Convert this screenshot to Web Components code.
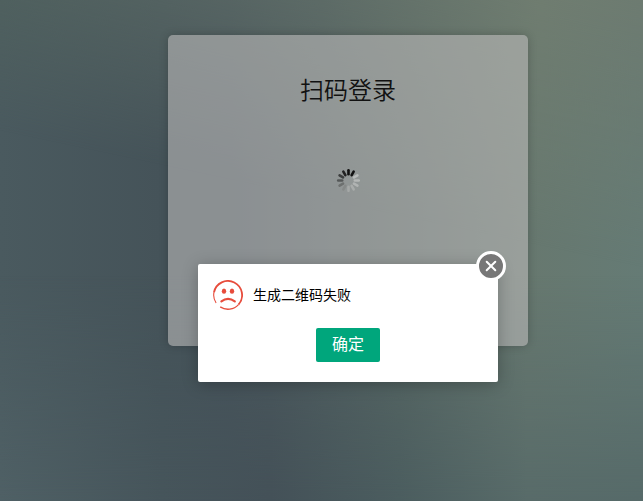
<!DOCTYPE html>
<html lang="zh-CN">
<head>
<meta charset="utf-8">
<meta name="viewport" content="width=device-width, initial-scale=1">
<title>扫码登录</title>
<style>
    html, body {
        margin: 0;
        min-height: 100%;
    }
    body {
        --page-shift: 53px;
        font-family: "Liberation Sans", "Noto Sans CJK SC", sans-serif;
        color: #000;
    }
</style>
</head>
<body>
<login-page>
    <login-card heading="扫码登录">
        <loading-spinner></loading-spinner>
    </login-card>
    <alert-dialog slot="dialog" confirm="确定">生成二维码失败</alert-dialog>
</login-page>

<script>
    class LoginPage extends HTMLElement {
        constructor() {
            super();

            const shadowRoot = this.attachShadow({ mode: 'open' });
            shadowRoot.innerHTML = `
                <main><slot></slot></main>
                <div class="overlay"><slot name="dialog"></slot></div>
                <style>
                    :host {
                        display: block;
                        position: relative;
                        isolation: isolate;
                        box-sizing: border-box;
                        min-height: 100vh;
                        overflow: hidden;
                        background: linear-gradient(90deg, #4a5a5f 0%, #455359 25%, #46535a 36%, #586763 62%, #67786f 82%, #657b75 100%);
                    }
                    /* the top and bottom tints fade into the middle one */
                    :host::before, :host::after {
                        content: "";
                        position: absolute;
                        inset: 0;
                        z-index: -1;
                    }
                    :host::before {
                        background: linear-gradient(90deg, #55675f 0%, #5c6b66 25%, #616f69 50%, #707d70 84%, #6d7b71 100%);
                        mask-image: linear-gradient(192deg, #000 0%, #0000 42%);
                    }
                    :host::after {
                        background: linear-gradient(90deg, #4f6065 0%, #46555b 25%, #445158 42%, #4b5d5f 62%, #586b69 82%, #566a69 100%);
                        mask-image: linear-gradient(0deg, #000 0%, #0000 45%);
                    }
                    main {
                        display: flex;
                        justify-content: center;
                        padding: 35px 0 35px var(--page-shift);
                    }
                    .overlay {
                        position: absolute;
                        inset: 0;
                        display: flex;
                        justify-content: center;
                        align-items: flex-start;
                        padding: 264px 0 0 var(--page-shift);
                    }
                </style>
            `;
        }
    }
    customElements.define('login-page', LoginPage);

    class LoginCard extends HTMLElement {
        constructor() {
            super();

            const shadowRoot = this.attachShadow({ mode: 'open' });
            shadowRoot.innerHTML = `
                <h1></h1>
                <div class="code"><slot></slot></div>
                <style>
                    :host {
                        display: block;
                        box-sizing: border-box;
                        width: 360px;
                        padding: 36px 30px 54px;
                        border-radius: 5px;
                        background: rgba(189, 187, 188, .58);
                        box-shadow: 0 0 10px rgba(0, 0, 0, .2);
                    }
                    h1 {
                        margin: 0;
                        font-size: 24px;
                        font-weight: 350;
                        line-height: 40px;
                        text-align: center;
                        color: #111;
                    }
                    .code {
                        display: flex;
                        justify-content: center;
                        height: 124px;
                        padding-top: 57px;
                    }
                </style>
            `;
            shadowRoot.querySelector('h1').textContent = this.getAttribute('heading');
        }
    }
    customElements.define('login-card', LoginCard);

    class LoadingSpinner extends HTMLElement {
        constructor() {
            super();

            // twelve spokes, fading anticlockwise from the darkest one
            const shades = ['#111', '#111', '#b9bcbb', '#b5b8b7', '#b1b4b3', '#a9acab',
                '#a5a8a7', '#868988', '#6d706f', '#555858', '#3c3e3e', '#222'];
            const spokes = shades.map((shade, i) =>
                `<path d="M12.5 2.2V6.2" stroke="${shade}" transform="rotate(${i * 30} 12.5 12.5)"/>`
            ).join('');

            const shadowRoot = this.attachShadow({ mode: 'open' });
            shadowRoot.innerHTML = `
                <svg viewBox="0 0 24 24" width="24" height="24" fill="none" stroke-width="2.6"
                    stroke-linecap="round" role="img" aria-label="加载中">${spokes}</svg>
                <style>
                    :host { display: block; }
                    svg { display: block; }
                </style>
            `;
        }
    }
    customElements.define('loading-spinner', LoadingSpinner);

    class AlertDialog extends HTMLElement {
        constructor() {
            super();

            const shadowRoot = this.attachShadow({ mode: 'open' });
            shadowRoot.innerHTML = `
                <button class="close" type="button" aria-label="关闭">
                    <svg viewBox="0 0 30 30" width="30" height="30">
                        <circle cx="15" cy="15" r="13.5" fill="#777" stroke="#fff" stroke-width="3"/>
                        <path d="M10.7 10.7l8.6 8.6m0-8.6l-8.6 8.6" stroke="#fff" stroke-width="2" stroke-linecap="round"/>
                    </svg>
                </button>
                <div class="message">
                    <svg viewBox="0 0 30 30" width="30" height="30" fill="none" stroke="#e74c3c" aria-hidden="true">
                        <path d="M3.1 23A14.2 14.2 0 0 1 1 12.2" stroke-width="1.1"/>
                        <path d="M1 12.2A14.2 14.2 0 1 1 25.5 24.6" stroke-width="1.8"/>
                        <path d="M25.5 24.6A14.2 14.2 0 0 1 7.2 26.9" stroke-width="1.3"/>
                        <path d="M8.4 21.3Q15 16.5 21.8 21.3" stroke-width="2.2" stroke-linecap="round"/>
                        <ellipse cx="11" cy="11.2" rx="2.2" ry="2.6" fill="#e74c3c" stroke="none"/>
                        <ellipse cx="19" cy="11.2" rx="2.2" ry="2.6" fill="#e74c3c" stroke="none"/>
                    </svg>
                    <span><slot></slot></span>
                </div>
                <button class="confirm" type="button"></button>
                <style>
                    :host {
                        display: flex;
                        flex-direction: column;
                        align-items: center;
                        gap: 18px;
                        position: relative;
                        box-sizing: border-box;
                        width: 300px;
                        padding: 16px 15px 20px;
                        border-radius: 2px;
                        background: #fff;
                        box-shadow: 0 2px 16px rgba(0, 0, 0, .25);
                    }
                    .message {
                        display: flex;
                        align-items: center;
                        align-self: stretch;
                        gap: 10px;
                        font-size: 14px;
                        line-height: 30px;
                    }
                    .message svg { flex: none; }
                    button {
                        border: none;
                        padding: 0;
                        font-family: inherit;
                        cursor: pointer;
                    }
                    .confirm {
                        padding: 0 16px;
                        border-radius: 2px;
                        background: #00a67c;
                        color: #fff;
                        font-size: 16px;
                        line-height: 34px;
                    }
                    .close {
                        position: absolute;
                        top: -13px;
                        right: -8px;
                        border-radius: 50%;
                        background: none;
                    }
                    .close svg { display: block; }
                </style>
            `;
            shadowRoot.querySelector('.confirm').textContent = this.getAttribute('confirm');
            shadowRoot.querySelectorAll('button').forEach(button => {
                button.addEventListener('click', () => this.remove());
            });
        }
    }
    customElements.define('alert-dialog', AlertDialog);
</script>
</body>
</html>
